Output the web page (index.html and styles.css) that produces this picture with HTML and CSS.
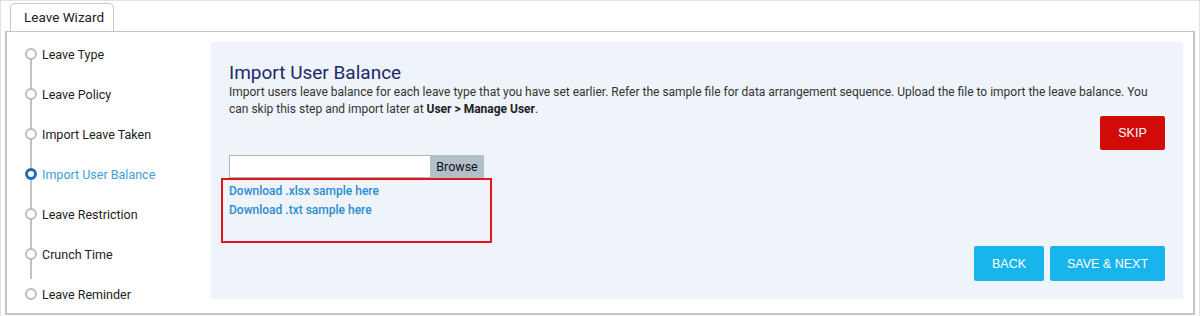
FILE: index.html
```html
<!DOCTYPE html>
<html lang="en">
<head>
    <meta charset="UTF-8">
    <meta name="viewport" content="width=device-width, initial-scale=1.0">
    <title>Leave Wizard</title>
    <link rel="stylesheet" href="styles.css">
</head>
<body>
    <div class="frame">
        <div class="tabs">
            <div class="tab">Leave Wizard</div>
        </div>

        <div class="wizard">
            <ul class="steps">
                <li><span class="dot"></span>Leave Type</li>
                <li><span class="dot"></span>Leave Policy</li>
                <li><span class="dot"></span>Import Leave Taken</li>
                <li class="active"><span class="dot"></span><span class="label">Import User Balance</span></li>
                <li><span class="dot"></span>Leave Restriction</li>
                <li><span class="dot"></span>Crunch Time</li>
                <li><span class="dot"></span>Leave Reminder</li>
            </ul>

            <div class="content">
                <h2>Import User Balance</h2>
                <p>Import users leave balance for each leave type that you have set earlier. Refer the sample file for data arrangement sequence. Upload the file to import the leave balance. You can skip this step and import later at <b>User &gt; Manage User</b>.</p>

                <div class="skip-row">
                    <button class="btn btn-red">SKIP</button>
                </div>

                <div class="file-row">
                    <span class="file-box"></span>
                    <span class="browse">Browse</span>
                </div>

                <div class="samples">
                    <a href="#">Download .xlsx sample here</a>
                    <a href="#">Download .txt sample here</a>
                </div>

                <div class="actions">
                    <button class="btn btn-blue back">BACK</button>
                    <button class="btn btn-blue next">SAVE &amp; NEXT</button>
                </div>
            </div>
        </div>
    </div>
</body>
</html>
```

FILE: styles.css
```css
* {
    margin: 0;
    padding: 0;
    box-sizing: border-box;
}

body {
    background: #fff;
    font-family: Roboto, "Liberation Sans", sans-serif;
    color: #222;
}

.frame {
    width: 1200px;
    height: 316px;
    border: 1px solid #e2e2e2;
    border-bottom: none;
    padding: 2px 4px 0 4px;
}

.tabs {
    display: flex;
    padding-left: 5px;
    height: 28px;
}

.tab {
    width: 104px;
    height: 28px;
    border: 1px solid #c8c8c8;
    border-bottom: none;
    border-radius: 5px 5px 0 0;
    background: #fff;
    font-size: 13.5px;
    line-height: 26px;
    padding-left: 13px;
    color: #222;
    position: relative;
    z-index: 1;
}

.wizard {
    display: flex;
    width: 1190px;
    height: 284px;
    border: 1px solid #c4c4c4;
    border-left-width: 2px;
    border-right-width: 2px;
    border-bottom-width: 2px;
    padding: 10px 10px 14px 0;
}

.steps {
    list-style: none;
    width: 204px;
    flex: none;
    margin-top: -8px;
    position: relative;
}

.steps::before {
    content: "";
    position: absolute;
    left: 23px;
    top: 20px;
    bottom: 20px;
    width: 2px;
    background: #c2c2c2;
}

.steps li {
    display: flex;
    align-items: center;
    height: 40px;
    font-size: 12.5px;
    color: #222;
    padding-left: 18px;
    position: relative;
}

.dot {
    flex: none;
    width: 12px;
    height: 12px;
    border: 2.5px solid #bdbdbd;
    border-radius: 50%;
    background: #fff;
    margin-right: 5px;
}

.steps li.active .dot {
    border: 3px solid #1d6fb5;
}

.steps li.active .label {
    color: #3d9fd6;
}

.content {
    flex: 1;
    background: #eff3fa;
    padding: 20px 18px 19px 18px;
}

.content h2 {
    font-size: 19px;
    font-weight: 400;
    line-height: 22px;
    color: #1b2a6b;
}

.content p {
    font-size: 12px;
    line-height: 17px;
    color: #333;
}

.content p b {
    color: #222;
}

.skip-row {
    display: flex;
    justify-content: flex-end;
    margin-top: -2px;
}

.btn {
    border: none;
    border-radius: 2px;
    color: #fff;
    font-family: "Liberation Sans", Arial, sans-serif;
    font-size: 12.5px;
    height: 35px;
    cursor: pointer;
}

.btn-red {
    background: #d10a0a;
    width: 65px;
    height: 34px;
}

.btn-blue {
    background: #18b4ec;
}

.back {
    width: 70px;
}

.next {
    width: 115px;
}

.file-row {
    display: flex;
    margin-top: 5px;
    height: 23px;
}

.file-box {
    width: 201px;
    height: 23px;
    background: #fff;
    border: 1px solid #b4b4b4;
    border-right: none;
}

.browse {
    width: 54px;
    height: 23px;
    background: #b3bfc8;
    font-size: 12.5px;
    line-height: 23px;
    text-align: center;
    color: #111;
}

.samples {
    display: flex;
    flex-direction: column;
    width: 271px;
    height: 65px;
    margin-left: -8px;
    border: 2px solid #e3141c;
    padding: 2px 0 0 6px;
}

.samples a {
    font-size: 12px;
    font-weight: 500;
    line-height: 19px;
    color: #2a8dd2;
    text-decoration: none;
}

.actions {
    display: flex;
    justify-content: flex-end;
    gap: 6px;
    margin-top: 3px;
}
```
